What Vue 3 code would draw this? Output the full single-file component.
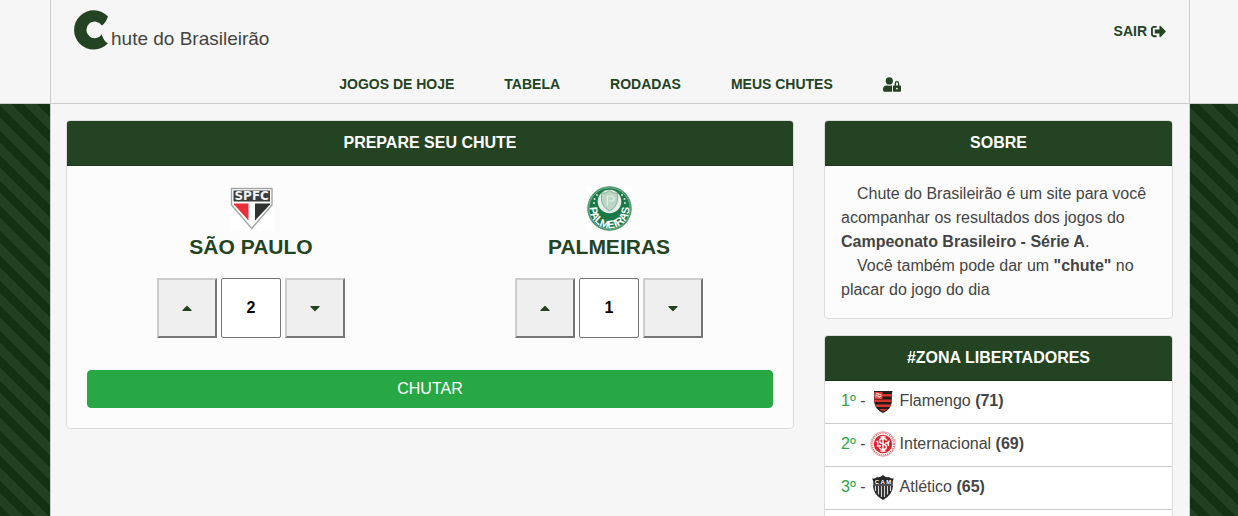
<script setup>
import { reactive } from 'vue'

const links = ['JOGOS DE HOJE', 'TABELA', 'RODADAS', 'MEUS CHUTES']

const teams = reactive([
  { id: 'spfc', name: 'SÃO PAULO', goals: 2 },
  { id: 'palmeiras', name: 'PALMEIRAS', goals: 1 }
])

const standings = [
  { id: 'fla', name: 'Flamengo', points: 71 },
  { id: 'int', name: 'Internacional', points: 69 },
  { id: 'cam', name: 'Atlético', points: 65 }
]

const less = (team) => {
  if (team.goals > 0) team.goals--
}
</script>

<template>
  <div class="page">
    <header class="header">
      <div class="container header-inner">
        <div class="topbar">
          <a href="#" class="brand">
            <svg class="brand-mark" viewBox="0 0 36 40" aria-hidden="true">
              <path d="M34 6.5A19.6 19.6 0 1 0 34 33.3Q29.500 31.300 27.800 24.200A8.300 8.300 0 1 1 27.800 15.600Q31.400 13.600 34 6.500Z" fill="#234323" />
            </svg>
            <span class="brand-text">hute do Brasileirão</span>
          </a>
          <a href="#" class="link exit">
            <span>SAIR</span>
            <svg class="icon-exit" viewBox="0 0 512 512" aria-hidden="true">
              <path fill="currentColor" d="M497 273L329 441c-15 15-41 4.5-41-17v-96H152c-13.3 0-24-10.7-24-24v-96c0-13.3 10.7-24 24-24h136V88c0-21.4 25.9-32 41-17l168 168c9.3 9.4 9.3 24.6 0 34zM192 436v-40c0-6.6-5.4-12-12-12H96c-17.7 0-32-14.3-32-32V160c0-17.7 14.3-32 32-32h84c6.6 0 12-5.4 12-12V76c0-6.6-5.4-12-12-12H96c-53 0-96 43-96 96v192c0 53 43 96 96 96h84c6.6 0 12-5.4 12-12z" />
            </svg>
          </a>
        </div>
        <nav class="nav">
          <a v-for="item in links" :key="item" href="#" class="link">{{ item }}</a>
          <a href="#" class="link" aria-label="Conta">
            <svg class="icon-user" viewBox="0 0 640 512" aria-hidden="true">
              <path fill="currentColor" d="M224 256A128 128 0 1 0 96 128a128 128 0 0 0 128 128zm96 64a63.08 63.08 0 0 1 8.1-30.5c-4.8-.5-9.5-1.5-14.5-1.5h-16.7a174.08 174.08 0 0 1-145.8 0h-16.7A134.43 134.43 0 0 0 0 422.4V464a48 48 0 0 0 48 48h280.9a63.54 63.54 0 0 1-8.9-32zm288-32h-32v-80a80 80 0 0 0-160 0v80h-32a32 32 0 0 0-32 32v160a32 32 0 0 0 32 32h224a32 32 0 0 0 32-32V320a32 32 0 0 0-32-32zM496 432a32 32 0 1 1 32-32 32 32 0 0 1-32 32zm32-144h-64v-80a32 32 0 0 1 64 0z" />
            </svg>
          </a>
        </nav>
      </div>
    </header>

    <div class="container content">
      <main class="col-main">
        <section class="card">
          <h2 class="card-title">PREPARE SEU CHUTE</h2>
          <form class="guess" @submit.prevent>
            <div class="teams">
              <div v-for="team in teams" :key="team.id" class="team">
                <svg v-if="team.id === 'spfc'" class="crest" viewBox="0 0 45 45" aria-hidden="true">
                  <rect width="45" height="45" fill="#fff" />
                  <path d="M2.500 2.500H43V19L22.700 42.500L2.500 19Z" fill="#fff" stroke="#a3a5a5" stroke-width="1.400" />
                  <path d="M4.500 4.500H41V15.500H4.500Z" fill="#3b3d3d" />
                  <path d="M5 17.500H19.500V34.500L5 18.500Z" fill="#ea2f38" />
                  <path d="M26 17.500H41V18.500L26 34.500Z" fill="#303131" />
                  <text x="22.700" y="14" text-anchor="middle" class="crest-spfc">SPFC</text>
                </svg>
                <svg v-else class="crest" viewBox="0 0 45 45" aria-hidden="true">
                  <defs><path id="palmeiras-arc" d="M3 19A19.800 19.800 0 1 0 42 19" /></defs>
                  <rect width="45" height="45" fill="#fff" />
                  <circle cx="22.500" cy="22.500" r="21.800" fill="#1b7847" stroke="#5c9f7b" />
                  <circle cx="22.500" cy="22.500" r="20.600" fill="none" stroke="#a5cbb6" stroke-width="0.700" />
                  <circle cx="22.500" cy="15.500" r="11.800" fill="#e5eee7" />
                  <path d="M14.500 7.500Q19 7.500 22.500 4.500Q26 7.500 30.500 7.500V14Q29.500 21.500 22.500 25Q15.500 21.500 14.500 14Z" fill="#bdd5c6" stroke="#85b198" />
                  <path d="M20.500 20V10H24.500Q27 10 27 12.500T24.500 15H22" fill="none" stroke="#e3eee7" stroke-width="1.200" />
                  <g fill="#d9e9df">
                    <circle cx="10" cy="9" r="1" /><circle cx="7.500" cy="13" r="1" /><circle cx="7" cy="17" r="1" />
                    <circle cx="35" cy="9" r="1" /><circle cx="37.500" cy="13" r="1" /><circle cx="38" cy="17" r="1" />
                  </g>
                  <text class="crest-palmeiras"><textPath href="#palmeiras-arc" startOffset="50%" text-anchor="middle">PALMEIRAS</textPath></text>
                </svg>
                <h3 class="team-name">{{ team.name }}</h3>
                <div class="stepper">
                  <button type="button" class="step" :aria-label="'Mais gols ' + team.name" @click="team.goals++"><svg class="caret" viewBox="0 0 320 512" aria-hidden="true"><path fill="currentColor" d="M288.662 352H31.338c-17.818 0-26.741-21.543-14.142-34.142l128.662-128.662c7.81-7.81 20.474-7.81 28.284 0l128.662 128.662c12.6 12.599 3.676 34.142-14.142 34.142z" /></svg></button> <input v-model.number="team.goals" class="goals" type="text" :aria-label="'Gols ' + team.name" /> <button type="button" class="step" :aria-label="'Menos gols ' + team.name" @click="less(team)"><svg class="caret" viewBox="0 0 320 512" aria-hidden="true"><path fill="currentColor" d="M31.3 192h257.3c17.8 0 26.7 21.5 14.1 34.1L174.1 354.8c-7.800 7.800-20.500 7.800-28.300 0L17.200 226.100C4.600 213.500 13.500 192 31.300 192z" /></svg></button>
                </div>
              </div>
            </div>
            <button type="submit" class="submit">CHUTAR</button>
          </form>
        </section>
      </main>

      <aside class="col-side">
        <section class="card">
          <h2 class="card-title">SOBRE</h2>
          <div class="about">
            <p>Chute do Brasileirão é um site para você acompanhar os resultados dos jogos do <strong>Campeonato Brasileiro - Série A</strong>.</p>
            <p>Você também pode dar um <strong>"chute"</strong> no placar do jogo do dia</p>
          </div>
        </section>

        <section class="card card-fill">
          <h2 class="card-title">#ZONA LIBERTADORES</h2>
          <ul class="standings">
            <li v-for="(row, i) in standings" :key="row.id" class="row">
              <span><span class="place">{{ i + 1 }}º</span> -</span>
              <svg v-if="row.id === 'fla'" class="badge" viewBox="0 0 26 26" aria-hidden="true">
                <path d="M4 3H22.500Q21.500 6 22 12Q22 21 13 25Q4 21 4 12Q4.500 6 4 3Z" fill="#231c1c" />
                <path d="M12 6H22V8.500H12ZM4 11.500H22V14H4ZM5 16.500H21L20 19H6.500ZM9 21H18L13 23.500Z" fill="#d9342b" />
                <path d="M4.500 4H12.500V11H4.500Z" fill="#df3d36" />
                <path d="M9 5.500H6V9.500M6 7.500H8M8 9.500V6.500H11V8.500H8L10.500 10" fill="none" stroke="#f5d6d2" stroke-width="0.800" />
              </svg>
              <svg v-else-if="row.id === 'int'" class="badge" viewBox="0 0 26 26" aria-hidden="true">
                <circle cx="13" cy="13" r="12.300" fill="#fff" stroke="#eda1a4" />
                <circle cx="13" cy="13" r="11" fill="none" stroke="#dc5b61" stroke-width="1.500" stroke-dasharray="1 1" />
                <circle cx="13" cy="13" r="9.200" fill="#e01f2a" />
                <path d="M13 5V21M10.500 6H15.500M10.500 20H15.500M17 9.500Q16 7.500 13 7.500Q9.500 7.500 9.500 10Q9.500 12 13 13Q16.500 14 16.500 16Q16.500 18.500 13 18.500Q10 18.500 9 16.500M6.500 10Q8.500 11 7.500 15H11M19.500 10Q17.500 11 18.500 15M15 12H19" fill="none" stroke="#fff" stroke-width="1.400" />
              </svg>
              <svg v-else class="badge" viewBox="0 0 26 26" aria-hidden="true">
                <path d="M2 4.500Q5 5 7 3Q10 4 13 1Q16 4 19 3Q21 5 24 4.500Q22 7 23 12Q22.500 21 13 26Q3.500 21 3 12Q4 7 2 4.500Z" fill="#272727" />
                <path d="M5.500 12V17M8.500 12V20.500M11.500 12V23M14.500 12V23M17.500 12V20.500M20.500 12V17" stroke="#d4d4d4" stroke-width="1.200" />
                <path d="M3 11H23" stroke="#8b8b8b" stroke-width="0.800" />
                <text x="13" y="10" text-anchor="middle" class="badge-cam">C A M</text>
              </svg>
              <span>{{ row.name }} <strong>({{ row.points }})</strong></span>
            </li>
          </ul>
        </section>
      </aside>
    </div>
  </div>
</template>

<style>
body {
  background-color: #133213;
  background-image: linear-gradient(45deg, #224122 25%, #133213 25%, #133213 50%, #224122 50%, #224122 75%, #133213 75%);
  background-size: 25px 25px;
  background-position: 20px 0;
}
</style>

<style scoped>
.page {
  display: flex;
  flex-direction: column;
  min-height: 100vh;
  font-family: "Liberation Sans", Arial, sans-serif;
  font-size: 16px;
  line-height: 24px;
  color: #444;
}
.page * {
  box-sizing: border-box;
}
h2, h3, p, ul {
  margin: 0;
}
a {
  text-decoration: none;
}
.container {
  width: 100%;
  max-width: 1140px;
  margin-left: max(0px, calc(50% - 569px));
  border: 0 solid #ccc;
  border-width: 0 1px;
}
.header {
  background: #f6f6f6;
  border-bottom: 1px solid #ccc;
}
.header-inner {
  padding: 10px 23px 7px;
}
.topbar {
  display: flex;
  justify-content: space-between;
  align-items: center;
}
.brand {
  display: flex;
  align-items: flex-end;
  gap: 1px;
  height: 42px;
  color: #444;
  font-size: 19px;
}
.brand-mark {
  align-self: flex-start;
  width: 36px;
  height: 40px;
}
.brand-text {
  line-height: 26px;
}
.link {
  display: flex;
  align-items: center;
  gap: 4px;
  color: #234323;
  font-size: 14px;
  font-weight: bold;
}
.icon-exit {
  width: 15px;
  height: 15px;
}
.nav {
  display: flex;
  justify-content: center;
  gap: 50px;
  padding: 20px 0 0;
}
.icon-user {
  width: 18px;
  height: 15px;
}
.content {
  flex: 1;
  display: flex;
  padding-right: 1px;
  background: #f6f6f6;
}
.col-main {
  width: 66.6667%;
  padding: 16px 15px 0;
}
.col-side {
  display: flex;
  flex-direction: column;
  gap: 16px;
  width: 33.3333%;
  padding: 16px 15px 0;
}
.card {
  background: #fcfcfc;
  border: 1px solid #dcdcdc;
  border-radius: 4px;
  overflow: hidden;
}
.card-fill {
  flex: 1;
  background: #fff;
  border-bottom: 0;
  border-radius: 4px 4px 0 0;
}
.card-title {
  padding: 10px 20px;
  border-bottom: 1px solid #1d371d;
  background: #234323;
  color: #fff;
  font-size: 16px;
  line-height: 24px;
  text-align: center;
}
.guess {
  padding: 20px;
}
.teams {
  display: flex;
  margin: 0 -15px;
}
.team {
  flex: 1;
  text-align: center;
}
.crest {
  display: block;
  width: 45px;
  height: 45px;
  margin: 0 auto;
}
.crest-spfc {
  fill: #f2f2f2;
  font: bold 12px "DejaVu Sans", sans-serif;
}
.crest-palmeiras {
  fill: #fff;
  font: bold 11px "Liberation Sans", sans-serif;
}
.team-name {
  color: #234323;
  font-size: 21px;
  line-height: 32px;
}
.stepper {
  padding: 15px 0 32px;
  font-size: 16px;
}
.step,
.goals {
  width: 60px;
  height: 60px;
  margin: 0;
  padding: 0;
  vertical-align: top;
}
.step {
  border: 2px solid;
  border-color: #ccc #767676 #767676 #ccc;
  background: #efefef;
  color: #234323;
}
.caret {
  width: 10px;
  height: 16px;
  vertical-align: middle;
}
.goals {
  border: 1px solid #767676;
  border-radius: 2px;
  background: #fff;
  color: #000;
  font: bold 16px "Liberation Sans", Arial, sans-serif;
  text-align: center;
}
.submit {
  display: block;
  width: 100%;
  padding: 6px 12px;
  border: 1px solid #28a745;
  border-radius: 4px;
  background: #28a745;
  color: #fff;
  font: 16px/24px "Liberation Sans", Arial, sans-serif;
}
.about {
  padding: 16px;
}
.about p {
  text-indent: 16px;
}
.standings {
  padding: 0;
  list-style: none;
}
.row {
  display: flex;
  align-items: center;
  gap: 4px;
  height: 43px;
  padding: 0 16px 2px;
  border-bottom: 1px solid #ccc;
}
.place {
  color: #28a745;
}
.badge {
  width: 26px;
  height: 26px;
}
.badge-cam {
  fill: #fff;
  font: bold 6px "Liberation Sans", sans-serif;
}
</style>
